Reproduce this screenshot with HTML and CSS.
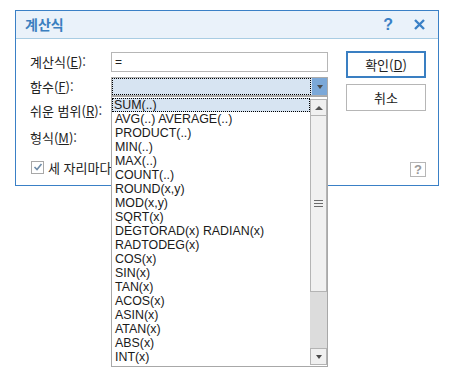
FILE: index.html
```html
<!DOCTYPE html>
<html lang="ko">
<head>
	<meta charset="utf-8">
	<title>계산식</title>
	<link rel="stylesheet" href="styles.css">
</head>
<body>
	<div class="dialog">
		<div class="titlebar">
			<span class="title">계산식</span>
			<span class="tb-help">?</span>
			<svg class="tb-close" width="11" height="11" viewBox="0 0 11 11"><path d="M1 1L10 10M10 1L1 10" stroke="#3a80c6" stroke-width="2.4" fill="none"/></svg>
		</div>
		<div class="content">
			<div class="fields">
				<div class="row r1">
					<span class="label">계산식(<u>E</u>):</span>
					<div class="input">=</div>
				</div>
				<div class="row r2">
					<span class="label">함수(<u>F</u>):</span>
					<div class="combo">
						<div class="combo-field"></div>
						<div class="combo-arrow"><span class="tri-down"></span></div>
						<div class="list">
							<div class="items">
								<div class="item selected">SUM(..)</div>
								<div class="item">AVG(..) AVERAGE(..)</div>
								<div class="item">PRODUCT(..)</div>
								<div class="item">MIN(..)</div>
								<div class="item">MAX(..)</div>
								<div class="item">COUNT(..)</div>
								<div class="item">ROUND(x,y)</div>
								<div class="item">MOD(x,y)</div>
								<div class="item">SQRT(x)</div>
								<div class="item">DEGTORAD(x) RADIAN(x)</div>
								<div class="item">RADTODEG(x)</div>
								<div class="item">COS(x)</div>
								<div class="item">SIN(x)</div>
								<div class="item">TAN(x)</div>
								<div class="item">ACOS(x)</div>
								<div class="item">ASIN(x)</div>
								<div class="item">ATAN(x)</div>
								<div class="item">ABS(x)</div>
								<div class="item">INT(x)</div>
							</div>
							<div class="scrollbar">
								<div class="sb-btn"><span class="tri-up"></span></div>
								<div class="sb-thumb"><span class="grip"></span></div>
								<div class="sb-track"></div>
								<div class="sb-btn"><span class="tri-down"></span></div>
							</div>
						</div>
					</div>
				</div>
				<div class="row r3"><span class="label">쉬운 범위(<u>R</u>):</span></div>
				<div class="row r4"><span class="label">형식(<u>M</u>):</span></div>
				<div class="row r5">
					<span class="check"><svg width="10" height="10" viewBox="0 0 10 10"><path d="M1.5 5L4 7.5L8.5 2" stroke="#6f8ca8" stroke-width="1.6" fill="none"/></svg></span>
					<span class="check-text">세 자리마다 쉼표로 자리 나눔(<u>C</u>)</span>
				</div>
			</div>
			<div class="buttons">
				<div class="btn ok">확인(<u>D</u>)</div>
				<div class="btn cancel">취소</div>
				<div class="help">?</div>
			</div>
		</div>
	</div>
</body>
</html>
```

FILE: styles.css
```css
html, body { margin: 0; padding: 0; background: #ffffff; }
body { min-height: 379px; font: 13px "Noto Sans CJK KR", "Liberation Sans", sans-serif; color: #222222; }

.dialog { box-sizing: border-box; width: 424px; height: 176px; margin: 0 0 0 15px; position: relative; top: 10px; border: 1px solid #3a80c6; background: #ffffff; }

.titlebar { display: flex; align-items: center; height: 27px; padding: 0 13px 0 9px; background: #eaf2fa; border-bottom: 1px solid #a9cde3; }
.title { flex: 1; font-weight: bold; font-size: 14px; color: #3a7fc0; line-height: 27px; }
.tb-help { font: bold 16px "Liberation Sans", sans-serif; color: #3a80c6; margin-right: 21px; }
.tb-close { display: block; }

.content { display: flex; height: 146px; box-sizing: border-box; padding: 13px 12px 0 14px; }
.fields { width: 314px; }
.row { display: flex; align-items: center; height: 20px; }
.r2 { margin-top: 5px; height: 19px; }
.r3 { margin-top: 5px; }
.r4 { margin-top: 7px; }
.r5 { margin-top: 9px; }
.label { width: 81px; white-space: nowrap; line-height: 20px; }

.input { box-sizing: border-box; width: 217px; height: 20px; border: 1px solid #b6b6b6; padding-left: 3px; font: 12px "Liberation Sans", sans-serif; line-height: 18px; }

.combo { position: relative; box-sizing: border-box; width: 217px; height: 19px; border: 1px solid #acacac; background: #d7e4f2; display: flex; }
.combo-field { flex: 1; margin: 0 1px 0 0; border: 1px dotted #000000; }
.combo-arrow { width: 15px; background: #7ba8d8; display: flex; align-items: center; justify-content: center; }
.tri-down { width: 0; height: 0; border-left: 3.5px solid transparent; border-right: 3.5px solid transparent; border-top: 4px solid #4a4a4a; }
.tri-up { width: 0; height: 0; border-left: 4px solid transparent; border-right: 4px solid transparent; border-bottom: 4px solid #555555; }

.list { position: absolute; z-index: 5; top: 18px; left: -1px; box-sizing: border-box; width: 217px; height: 271px; border: 1px solid #a8a8a8; background: #ffffff; display: flex; padding: 1px 0 1px 0; }
.items { flex: 1; font: 12.4px "Liberation Sans", sans-serif; color: #1a1a1a; }
.item { box-sizing: border-box; height: 14px; line-height: 14px; padding-left: 2px; border: 1px solid transparent; border-width: 0 1px; white-space: nowrap; overflow: hidden; }
.item.selected { background: #d7e4f2; border: 1px dotted #000000; line-height: 12px; padding-left: 1px; }

.scrollbar { width: 17px; display: flex; flex-direction: column; margin: 1px 0 0 0; }
.sb-btn { box-sizing: border-box; height: 17px; border: 1px solid #b4b4b4; background: #f0f0f0; display: flex; align-items: center; justify-content: center; }
.sb-thumb { box-sizing: border-box; height: 176px; border: 1px solid #b4b4b4; border-top: 0; background: #f0f0f0; display: flex; align-items: center; justify-content: center; }
.grip { width: 9px; height: 5px; border-top: 1px solid #6a6a6a; border-bottom: 1px solid #6a6a6a; position: relative; }
.grip::after { content: ""; position: absolute; left: 0; right: 0; top: 2px; border-top: 1px solid #6a6a6a; }
.sb-track { flex: 1; background: #dcdcdc; }

.check { box-sizing: border-box; width: 13px; height: 13px; border: 1px solid #a8a8a8; display: flex; align-items: center; justify-content: center; margin: 0 4px 0 1px; background: #ffffff; }
.check svg { display: block; }
.check-text { white-space: nowrap; }

.buttons { display: flex; flex-direction: column; align-items: flex-end; width: 81px; margin-left: 17px; }
.btn { box-sizing: border-box; width: 80px; height: 27px; display: flex; align-items: center; justify-content: center; border: 1px solid #b6b6b6; background: #ffffff; }
.btn.ok { margin-top: -1px; border: 2px solid #3a7fc2; }
.btn.cancel { margin-top: 6px; }
.help { box-sizing: border-box; width: 16px; height: 15px; margin-top: auto; margin-bottom: 8px; border: 1px solid #b6b6b6; font: bold 13px "Liberation Sans", sans-serif; color: #9a9a9a; display: flex; align-items: center; justify-content: center; }
```
